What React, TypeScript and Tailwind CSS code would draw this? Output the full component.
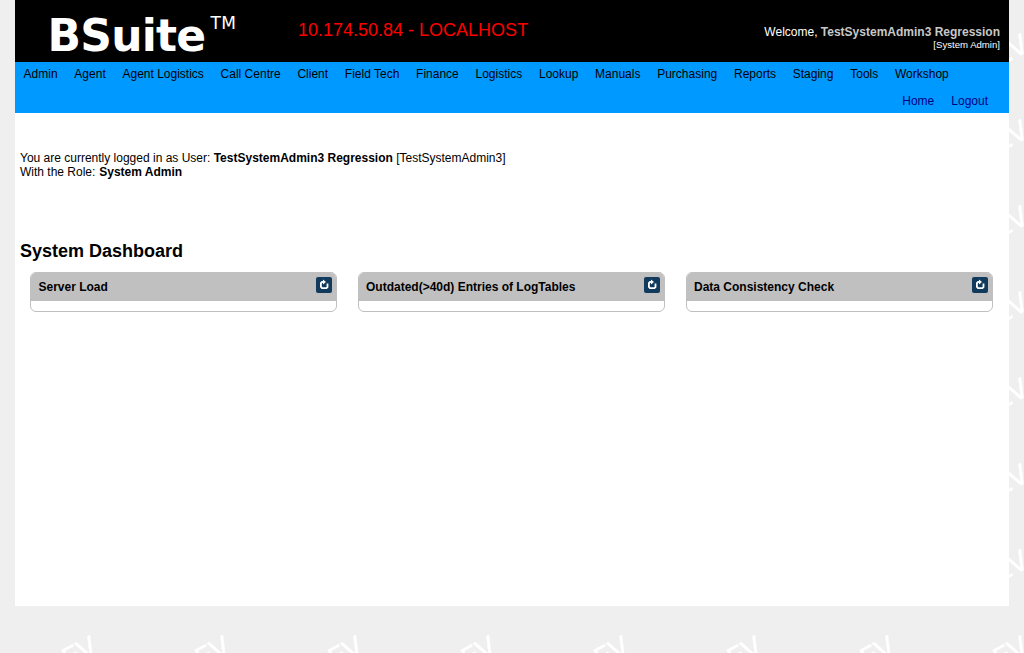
const menu = [
  'Admin', 'Agent', 'Agent Logistics', 'Call Centre', 'Client', 'Field Tech', 'Finance', 'Logistics',
  'Lookup', 'Manuals', 'Purchasing', 'Reports', 'Staging', 'Tools', 'Workshop',
];

const panels = ['Server Load', 'Outdated(>40d) Entries of LogTables', 'Data Consistency Check'];

function Watermark() {
  return (
    <svg className="absolute inset-0" width="1024" height="653" aria-hidden="true">
      <defs>
        <pattern id="env" width="133" height="86" patternUnits="userSpaceOnUse">
          <text
            transform="translate(91.5 54.5) rotate(-28)"
            x="-36.5 -17.5 -0.5"
            textAnchor="middle"
            stroke="#fff"
            strokeWidth="0.3"
            textRendering="geometricPrecision"
            className="fill-white font-['DejaVu_Sans',sans-serif] text-[27px]"
          >
            DEV
          </text>
        </pattern>
      </defs>
      <rect width="1024" height="653" fill="url(#env)" />
    </svg>
  );
}

function RefreshIcon() {
  return (
    <svg width="16" height="16" viewBox="0 0 16 16" className="block">
      <rect width="16" height="16" rx="2" fill="#123a5c" />
      <path d="M7.5 5H6L4.9 6.1v3.8L6 11.2h4.4l1.1-1.1V6.5" fill="none" stroke="#fff" strokeWidth="1.8" />
      <path d="M7 2.5v5l3-2.5z" fill="#fff" />
    </svg>
  );
}

function Panel({ title }: { title: string }) {
  return (
    <section className="h-10 w-[307px] overflow-hidden rounded-[6px] border border-[#c0c0c0] bg-white first:[&>div]:pl-[7.5px]">
      <div className="flex h-7 items-start justify-between bg-[#c0c0c0] pl-[7px] pr-1 pt-1">
        <h3 className="pt-[3px] text-[12px] leading-[14px] font-bold">{title}</h3>
        <button type="button" aria-label="Refresh">
          <RefreshIcon />
        </button>
      </div>
    </section>
  );
}

export default function App() {
  return (
    <div className="relative h-[653px] w-[1024px] overflow-hidden bg-[#efefef] font-['Liberation_Sans',Arial,sans-serif] text-[12px] leading-[14px] text-black">
      <Watermark />
      <div className="relative ml-[15px] h-[606px] w-[994px] bg-white">
        <header className="flex h-[62px] bg-black">
          <div className="flex w-[283px] items-start pl-[32.5px] font-['DejaVu_Sans',sans-serif] text-white">
            <span className="w-[163px] pt-2 text-[44px] leading-[56px] font-bold tracking-[-0.8px]">BSuite</span>
            <span className="pt-[11px] text-[17px] leading-[24px] tracking-[0.4px]">TM</span>
          </div>
          <div className="pt-5 text-[18px] leading-[20px] text-[#f00]">10.174.50.84 - LOCALHOST</div>
          <div className="ml-auto pt-[25px] pr-[9px] text-right text-white">
            <div>
              Welcome, <b className="text-[#c8c8c8]">TestSystemAdmin3 Regression</b>
            </div>
            <div className="text-[9.6px] leading-[12px]">[System Admin]</div>
          </div>
        </header>
        <nav className="h-[51px] bg-[#0099ff]">
          <div className="flex gap-[16.75px] pt-[5px] pl-[8.6px] whitespace-nowrap">
            {menu.map((item) => (
              <a key={item}>{item}</a>
            ))}
          </div>
          <div className="mt-[13px] flex justify-end gap-[17px] pr-[21px] text-[#000080]">
            <a>Home</a>
            <a>Logout</a>
          </div>
        </nav>
        <main className="px-[5px] pt-[38px]">
          <p>
            You are currently logged in as User: <b>TestSystemAdmin3 Regression</b> [TestSystemAdmin3]
          </p>
          <p>
            With the Role: <b className="ml-[0.5px]">System Admin</b>
          </p>
          <h2 className="mt-[62px] text-[18px] leading-[20px] font-bold">System Dashboard</h2>
          <div className="mt-[11px] ml-[10px] flex gap-[21px]">
            {panels.map((title) => (
              <Panel key={title} title={title} />
            ))}
          </div>
        </main>
      </div>
    </div>
  );
}
